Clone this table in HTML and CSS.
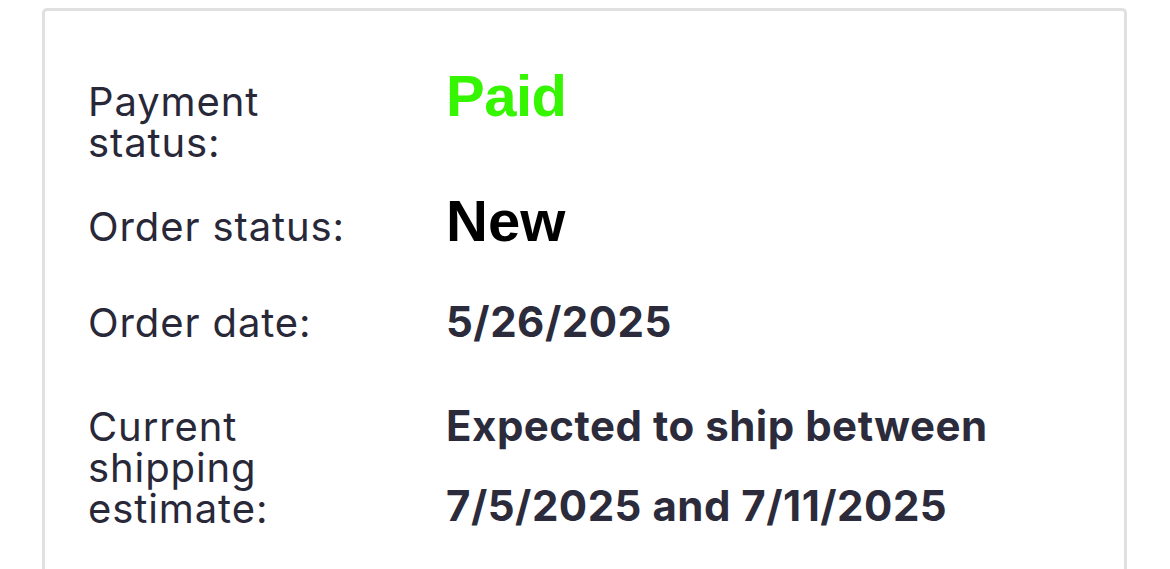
FILE: index.html
```html
<!DOCTYPE html>
<html lang="en">
<head>
<meta charset="utf-8">
<title>Order details</title>
<link rel="stylesheet" href="styles.css">
</head>
<body>
<div class="card">
  <div class="row">
    <div class="label">Payment<br>status:</div>
    <div class="value big paid">Paid</div>
  </div>
  <div class="row row-new">
    <div class="label">Order status:</div>
    <div class="value big new">New</div>
  </div>
  <div class="row row-date">
    <div class="label">Order date:</div>
    <div class="value">5/26/2025</div>
  </div>
  <div class="row row-ship">
    <div class="label">Current<br>shipping<br>estimate:</div>
    <div class="value">Expected to ship between 7/5/2025 and 7/11/2025</div>
  </div>
</div>
</body>
</html>
```

FILE: styles.css
```css
html, body {
  margin: 0;
  padding: 0;
  background: #ffffff;
}
body {
  padding: 8px 43px 0 42px;
  height: 569px;
  box-sizing: border-box;
  overflow: hidden;
}
.card {
  border: 3px solid #e0e0e0;
  border-bottom: none;
  border-radius: 5px 5px 0 0;
  padding: 55px 40px 60px 43px;
  min-height: 700px;
  box-sizing: border-box;
}
.row {
  display: flex;
  align-items: baseline;
}
.row-new { margin-top: 28px; }
.row-date { margin-top: 31px; }
.row-ship { margin-top: 24px; }
.label {
  width: 358px;
  flex: none;
  font-family: "Inter", "Liberation Sans", sans-serif;
  font-size: 40px;
  letter-spacing: 0.9px;
  line-height: 41px;
  color: #282839;
}
.value {
  font-family: "Inter", "Liberation Sans", sans-serif;
  font-weight: 700;
  font-size: 42px;
  letter-spacing: 0.5px;
  line-height: 80px;
  color: #2b2b3b;
  max-width: 580px;
}
.big {
  font-family: "Liberation Sans", Arial, sans-serif;
  font-size: 58px;
  letter-spacing: 0;
  line-height: 60px;
}
.paid { color: #36f500; letter-spacing: -0.5px; }
.new { color: #000000; }
```
